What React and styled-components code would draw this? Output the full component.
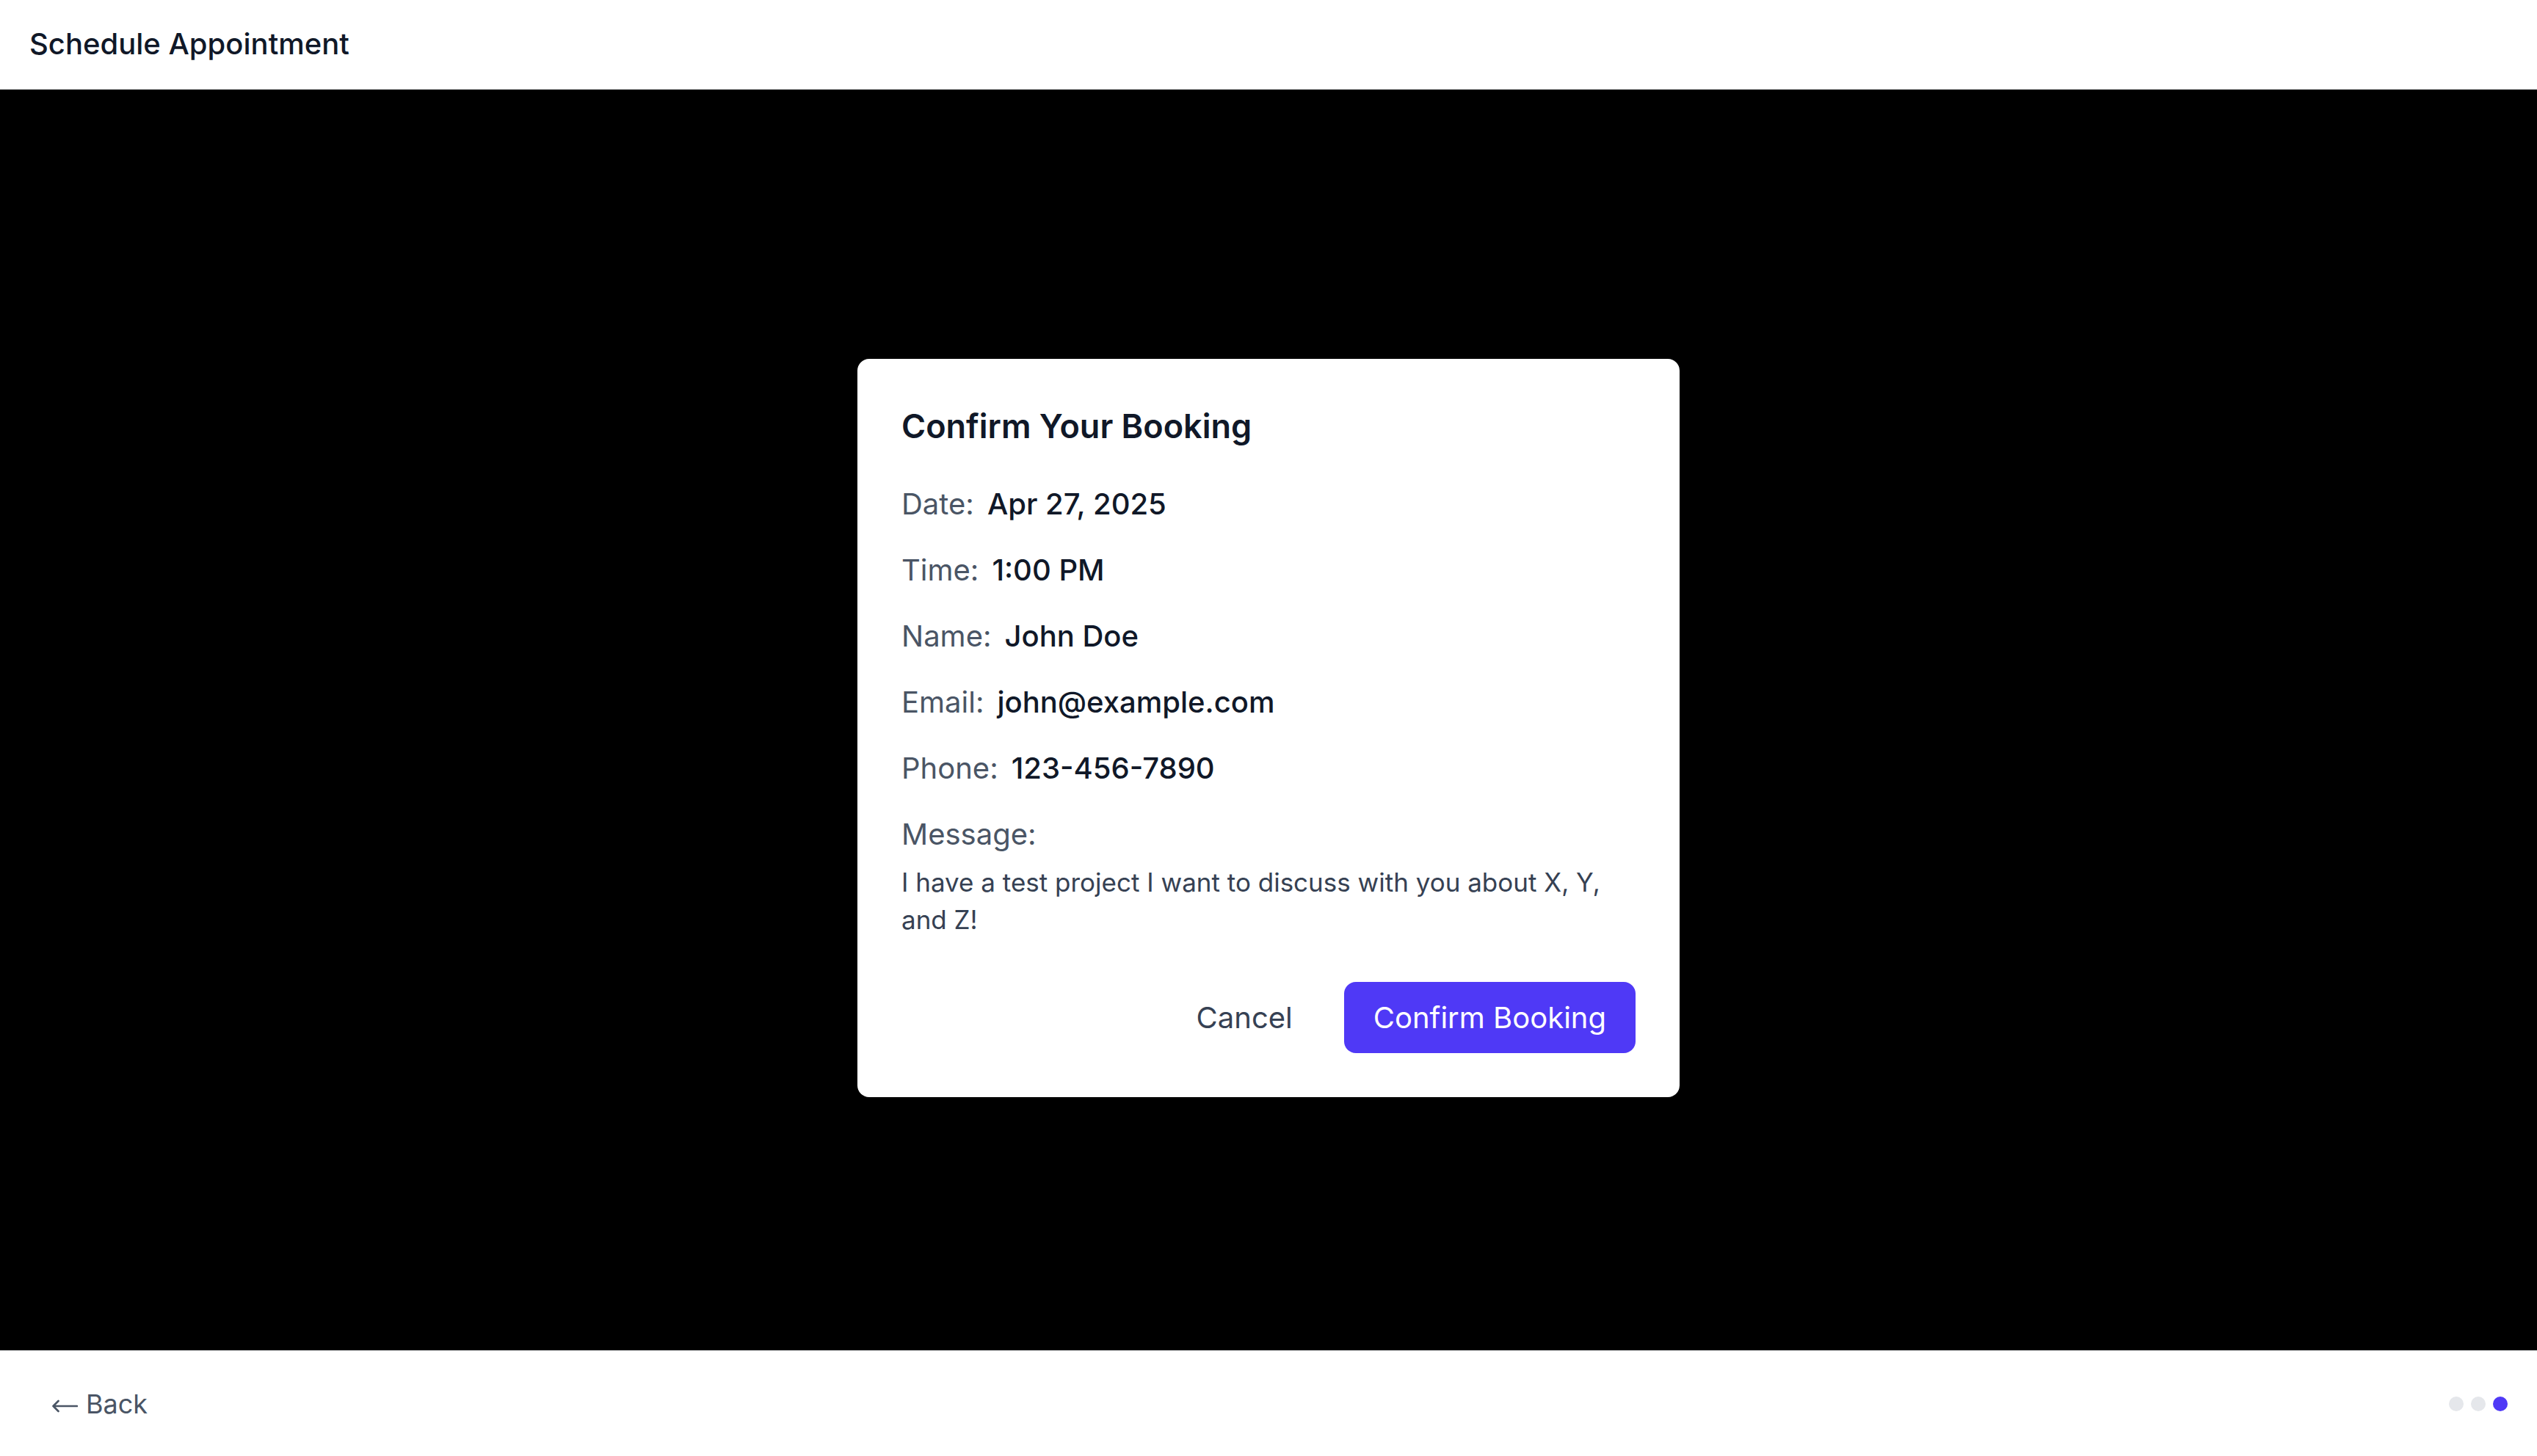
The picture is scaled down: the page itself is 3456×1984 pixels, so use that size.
import React from "react";
import styled, { createGlobalStyle } from "styled-components";

const GlobalStyle = createGlobalStyle`
	* {
		box-sizing: border-box;
	}

	html,
	body {
		margin: 0;
		padding: 0;
		height: 100%;
	}

	body {
		font-family: Inter, "Noto Sans", sans-serif;
		color: #101828;
		background: #ffffff;
	}

	#root {
		height: 100%;
	}
`;

const Page = styled.div`
	display: flex;
	flex-direction: column;
	height: 100vh;
`;

const Header = styled.header`
	display: flex;
	align-items: center;
	height: 122px;
	padding: 0 40px;
	border-bottom: 2px solid #f3f4f6;
	background: #ffffff;

	h1 {
		margin: 0;
		font-size: 40px;
		line-height: 56px;
		font-weight: 500;
		color: #101828;
	}
`;

const Stage = styled.main`
	flex: 1;
	display: flex;
	align-items: center;
	justify-content: center;
	padding-top: 22px;
	background: #000000;
`;

const Dialog = styled.section`
	width: 1120px;
	padding: 60px;
	border-radius: 16px;
	background: #ffffff;

	h2 {
		margin: 0 0 46px;
		font-size: 45px;
		line-height: 64px;
		font-weight: 600;
		color: #101828;
	}
`;

const Details = styled.dl`
	display: flex;
	flex-direction: column;
	gap: 34px;
	margin: 0;
`;

const Row = styled.div`
	display: flex;
	align-items: baseline;
	gap: 18px;
	font-size: 40px;
	line-height: 56px;

	dt {
		color: #4a5565;
	}

	dd {
		margin: 0;
		font-weight: 500;
		color: #101828;
	}
`;

const Note = styled.div`
	display: flex;
	flex-direction: column;
	gap: 12px;

	dt {
		font-size: 40px;
		line-height: 56px;
		color: #4a5565;
	}

	dd {
		margin: 0;
		font-size: 35px;
		line-height: 51px;
		color: #364153;
	}
`;

const Actions = styled.div`
	display: flex;
	justify-content: flex-end;
	gap: 30px;
	margin-top: 59px;
`;

const Button = styled.button`
	height: 97px;
	padding: 0 40px;
	border: none;
	border-radius: 16px;
	font-family: inherit;
	font-size: 40px;
	line-height: 56px;
	cursor: pointer;
	background: ${({ primary }) => (primary ? "#4f39f6" : "transparent")};
	color: ${({ primary }) => (primary ? "#ffffff" : "#364153")};
`;

const Footer = styled.footer`
	display: flex;
	align-items: center;
	justify-content: space-between;
	height: 144px;
	padding: 0 40px 0 70px;
	border-top: 2px solid #f3f4f6;
	background: #ffffff;
`;

const BackLink = styled.button`
	display: flex;
	align-items: center;
	gap: 11px;
	padding: 0;
	border: none;
	background: none;
	font-family: inherit;
	font-size: 36px;
	line-height: 56px;
	color: #4a5565;
	cursor: pointer;

	svg {
		margin-top: 5px;
	}
`;

const Steps = styled.div`
	display: flex;
	gap: 10px;
`;

const Dot = styled.span`
	width: 20px;
	height: 20px;
	border-radius: 50%;
	background: ${({ active }) => (active ? "#4f39f6" : "#e5e7eb")};
`;

const details = [
	["Date:", "Apr 27, 2025"],
	["Time:", "1:00 PM"],
	["Name:", "John Doe"],
	["Email:", "john@example.com"],
	["Phone:", "123-456-7890"],
];

const App = () => {
	return (
		<>
			<GlobalStyle />
			<Page>
				<Header>
					<h1>Schedule Appointment</h1>
				</Header>

				<Stage>
					<Dialog>
						<h2>Confirm Your Booking</h2>
						<Details>
							{details.map(([label, value]) => (
								<Row key={label}>
									<dt>{label}</dt>
									<dd>{value}</dd>
								</Row>
							))}
							<Note>
								<dt>Message:</dt>
								<dd>I have a test project I want to discuss with you about X, Y, and Z!</dd>
							</Note>
						</Details>
						<Actions>
							<Button>Cancel</Button>
							<Button primary>Confirm Booking</Button>
						</Actions>
					</Dialog>
				</Stage>

				<Footer>
					<BackLink>
						<svg width="36" height="18" viewBox="0 0 36 18" fill="none" stroke="currentColor" strokeWidth="2.6" strokeLinecap="round" strokeLinejoin="round">
							<path d="M35 9H2.5M9.5 2L2.5 9L9.5 16" />
						</svg>
						Back
					</BackLink>
					<Steps>
						<Dot />
						<Dot />
						<Dot active />
					</Steps>
				</Footer>
			</Page>
		</>
	);
};

export default App;
